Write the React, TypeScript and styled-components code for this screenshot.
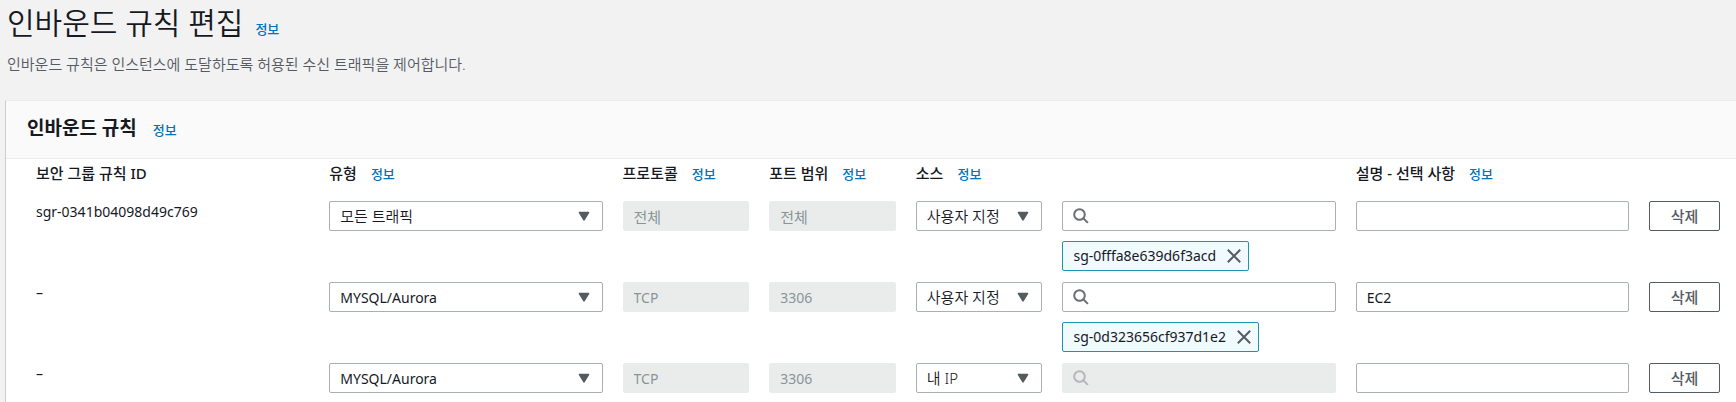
import React from 'react';
import styled, { createGlobalStyle, css } from 'styled-components';

const GlobalStyle = createGlobalStyle`
  * { box-sizing: border-box; }
  body {
    margin: 0;
    background: #f2f2f2;
    color: #16191f;
    font-family: "Noto Sans", "Noto Sans CJK KR", sans-serif;
    font-size: 14px;
    line-height: 22px;
  }
`;

const Page = styled.main`
  display: flex;
  flex-direction: column;
  min-height: 100vh;
  padding-left: 5px;
`;

const PageHeader = styled.header`
  display: flex;
  flex-direction: column;
  gap: 11px;
  padding: 4px 2px 25px;
`;

const TitleRow = styled.div`
  display: flex;
  align-items: baseline;
  gap: 12px;
`;

const PageTitle = styled.h1`
  margin: 0;
  font-size: 30px;
  font-weight: 350;
  line-height: 38px;
`;

const Description = styled.p`
  margin: 0;
  color: #545b64;
  font-size: 15px;
  font-weight: 350;
  line-height: 22px;
`;

const InfoLink = styled.a`
  color: #0073bb;
  font-size: 13px;
  font-weight: 500;
  text-decoration: none;
`;

const Panel = styled.section`
  flex: 1;
  background: #fff;
  border-left: 1px solid #cccfcf;
  border-top: 1px solid #eaeded;
`;

const PanelHeader = styled.div`
  display: flex;
  align-items: baseline;
  gap: 16px;
  padding: 13px 21px 16px;
  background: #fafafa;
  border-bottom: 1px solid #eaeded;
`;

const PanelTitle = styled.h2`
  margin: 0;
  font-size: 19px;
  font-weight: 700;
  line-height: 28px;
`;

const RulesTable = styled.table`
  display: block;
  padding: 0 6px 0 20px;
`;

const TableHead = styled.thead`
  display: block;
`;

const TableBody = styled.tbody`
  display: flex;
  flex-direction: column;
  gap: 11px;
`;

const TableRow = styled.tr`
  display: grid;
  grid-template-columns: 2fr 2fr 1fr 1fr 1fr 2fr 2fr 91px;
`;

const HeadCell = styled.th`
  display: flex;
  align-items: baseline;
  gap: 14px;
  min-width: 0;
  padding: 3px 10px 16px;
  font-size: 15px;
  font-weight: 500;
  line-height: 22px;
  white-space: nowrap;
`;

const Cell = styled.td`
  display: flex;
  flex-direction: column;
  align-items: flex-start;
  gap: 10px;
  min-width: 0;
  padding: 0 10px;
`;

const control = css`
  width: 100%;
  height: 30px;
  padding: 0 10px;
  border: 1px solid #aab0b1;
  border-radius: 2px;
  background: #fff;
  color: #16191f;
  font-family: inherit;
  font-size: 14px;
  &:disabled {
    border-color: #eaecec;
    background: #eaecec;
    color: #879596;
    opacity: 1;
  }
`;

const TextInput = styled.input<{ $hangul?: boolean }>`
  ${control}
  font-size: ${(p) => (p.$hangul ? 15 : 14)}px;
`;

const SearchInput = styled.input`
  ${control}
  padding-left: 34px;
`;

const SelectInput = styled.select<{ $hangul?: boolean }>`
  ${control}
  appearance: none;
  padding-right: 30px;
  font-size: ${(p) => (p.$hangul ? 15 : 14)}px;
  font-weight: ${(p) => (p.$hangul ? 350 : 400)};
`;

const Field = styled.div`
  position: relative;
  width: 100%;
  height: 30px;
`;

const Overlay = styled.span<{ $side: 'left' | 'right' }>`
  position: absolute;
  top: 0;
  bottom: 0;
  ${(p) => p.$side}: 11px;
  display: flex;
  align-items: center;
  pointer-events: none;
`;

const Token = styled.span`
  display: inline-flex;
  align-items: center;
  gap: 10px;
  height: 30px;
  padding: 0 6px 0 10px;
  border: 1px solid #1996b0;
  border-radius: 2px;
  background: #f1faff;
`;

const TokenRemove = styled.button`
  display: flex;
  padding: 0;
  border: 0;
  background: none;
`;

const DeleteButton = styled.button`
  width: 100%;
  height: 30px;
  padding: 0 0 2px;
  border: 1px solid #545b64;
  border-radius: 2px;
  background: #fff;
  color: #545b64;
  font-family: inherit;
  font-size: 15px;
  font-weight: 500;
`;

const RuleId = styled.span`
  line-height: 22px;
`;

const Caret = () => (
  <svg width="16" height="16" viewBox="0 0 16 16" aria-hidden="true">
    <path d="M3.5 4.5h9L8 11.8z" fill="#545b5e" stroke="#545b5e" strokeWidth="1.6" strokeLinejoin="round" />
  </svg>
);

const SearchIcon = ({ muted }: { muted: boolean }) => (
  <svg width="16" height="16" viewBox="0 0 16 16" fill="none" stroke={muted ? '#b3b8b8' : '#6b7072'} strokeWidth="2" aria-hidden="true">
    <circle cx="6.5" cy="6.5" r="5.3" />
    <path d="M10.3 10.3l4.6 4.6" />
  </svg>
);

const CloseIcon = () => (
  <svg width="16" height="16" viewBox="0 0 16 16" fill="none" stroke="#545b64" strokeWidth="2" aria-hidden="true">
    <path d="M1.8 1.8l12.4 12.4M14.2 1.8L1.8 14.2" />
  </svg>
);

const isHangul = (text: string) => /[가-힣]/.test(text);

interface SelectProps {
  label: string;
  value: string;
  options: string[];
}

const Select = ({ label, value, options }: SelectProps) => (
  <Field>
    <SelectInput aria-label={label} defaultValue={value} $hangul={isHangul(value)}>
      {options.map((o) => (
        <option key={o}>{o}</option>
      ))}
    </SelectInput>
    <Overlay $side="right">
      <Caret />
    </Overlay>
  </Field>
);

const Info = () => <InfoLink href="#info">정보</InfoLink>;

const columns = [
  { title: '보안 그룹 규칙 ID', info: false },
  { title: '유형', info: true },
  { title: '프로토콜', info: true },
  { title: '포트 범위', info: true },
  { title: '소스', info: true },
  { title: '', info: false },
  { title: '설명 - 선택 사항', info: true },
  { title: '', info: false },
];

const rules = [
  { id: 'sgr-0341b04098d49c769', type: '모든 트래픽', protocol: '전체', port: '전체', source: '사용자 지정', group: 'sg-0fffa8e639d6f3acd', note: '' },
  { id: '–', type: 'MYSQL/Aurora', protocol: 'TCP', port: '3306', source: '사용자 지정', group: 'sg-0d323656cf937d1e2', note: 'EC2' },
  { id: '–', type: 'MYSQL/Aurora', protocol: 'TCP', port: '3306', source: '내 IP', group: '', note: '' },
];

export default function App() {
  return (
    <>
      <GlobalStyle />
      <Page>
        <PageHeader>
          <TitleRow>
            <PageTitle>인바운드 규칙 편집</PageTitle>
            <Info />
          </TitleRow>
          <Description>인바운드 규칙은 인스턴스에 도달하도록 허용된 수신 트래픽을 제어합니다.</Description>
        </PageHeader>
        <Panel>
          <PanelHeader>
            <PanelTitle>인바운드 규칙</PanelTitle>
            <Info />
          </PanelHeader>
          <RulesTable>
            <TableHead>
              <TableRow>
                {columns.map((c, i) => (
                  <HeadCell key={i} scope="col">
                    {c.title}
                    {c.info && <Info />}
                  </HeadCell>
                ))}
              </TableRow>
            </TableHead>
            <TableBody>
              {rules.map((r, i) => (
                <TableRow key={i}>
                  <Cell>
                    <RuleId>{r.id}</RuleId>
                  </Cell>
                  <Cell>
                    <Select label="유형" value={r.type} options={['모든 트래픽', 'MYSQL/Aurora']} />
                  </Cell>
                  <Cell>
                    <TextInput aria-label="프로토콜" defaultValue={r.protocol} $hangul={isHangul(r.protocol)} disabled />
                  </Cell>
                  <Cell>
                    <TextInput aria-label="포트 범위" defaultValue={r.port} $hangul={isHangul(r.port)} disabled />
                  </Cell>
                  <Cell>
                    <Select label="소스" value={r.source} options={['사용자 지정', '내 IP']} />
                  </Cell>
                  <Cell>
                    <Field>
                      <SearchInput type="text" aria-label="소스 검색" disabled={!r.group} />
                      <Overlay $side="left">
                        <SearchIcon muted={!r.group} />
                      </Overlay>
                    </Field>
                    {r.group && (
                      <Token>
                        {r.group}
                        <TokenRemove type="button" aria-label={`${r.group} 제거`}>
                          <CloseIcon />
                        </TokenRemove>
                      </Token>
                    )}
                  </Cell>
                  <Cell>
                    <TextInput aria-label="설명" defaultValue={r.note} />
                  </Cell>
                  <Cell>
                    <DeleteButton type="button">삭제</DeleteButton>
                  </Cell>
                </TableRow>
              ))}
            </TableBody>
          </RulesTable>
        </Panel>
      </Page>
    </>
  );
}
